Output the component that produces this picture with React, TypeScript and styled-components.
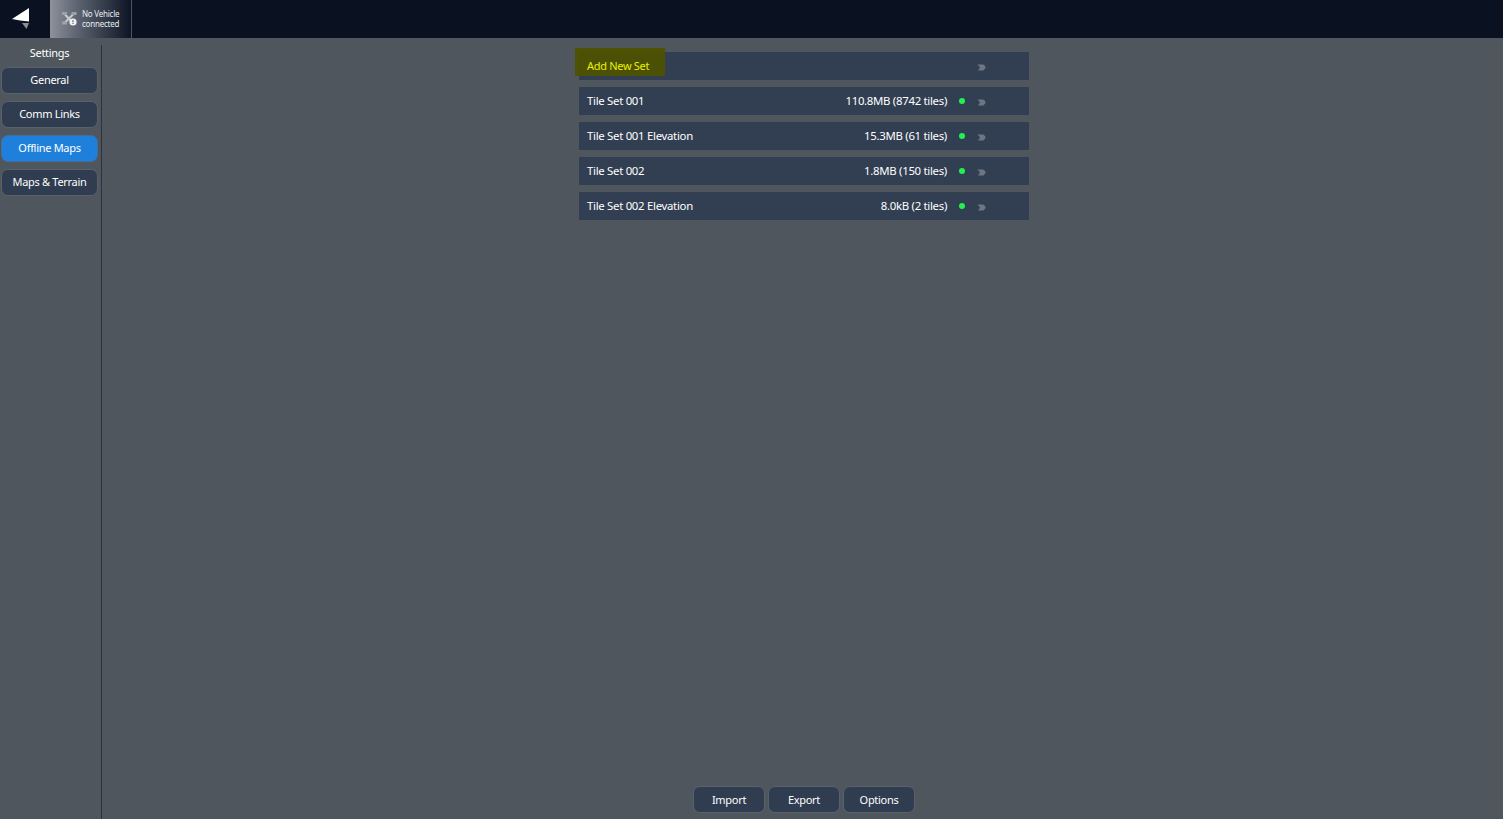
import React from "react";
import styled, { createGlobalStyle } from "styled-components";

const Global = createGlobalStyle`
  html, body { margin: 0; padding: 0; height: 100%; background: #4f565e; overflow: hidden; }
  #root { height: 100%; }
  * { box-sizing: border-box; }
`;

const Page = styled.div`
  display: flex;
  flex-direction: column;
  width: 100%;
  height: 819px;
  background: #4f565e;
  color: #fff;
  font-family: "Noto Sans", "DejaVu Sans", sans-serif;
  font-size: 11.4px;
  letter-spacing: -0.3px;
`;

const TopBar = styled.header`
  display: flex;
  flex: none;
  height: 38px;
  background: #0a1120;
`;

const LogoCell = styled.div`
  display: flex;
  width: 50px;
  height: 38px;
  padding: 6px 0 0 12px;
`;

const VehicleButton = styled.div`
  display: flex;
  align-items: center;
  gap: 5px;
  width: 82px;
  height: 38px;
  padding: 0 0 0 12px;
  background: linear-gradient(90deg, #8d929b 0%, #5b6270 35%, #0d1423 100%);
  border-right: 1px solid #4f565e;
`;

const VehicleText = styled.div`
  margin-top: -1px;
  font-size: 8px;
  line-height: 10px;
  letter-spacing: -0.22px;
  color: #e8ecef;
`;

const Body = styled.div`
  display: flex;
  flex: 1;
  min-height: 0;
`;

const Sidebar = styled.aside`
  display: flex;
  flex: none;
  flex-direction: column;
  gap: 7px;
  width: 102px;
  margin-top: 7px;
  padding: 0 3px 0 1px;
  border-right: 1px solid #2c333b;
`;

const SidebarTitle = styled.div`
  height: 15px;
  text-align: center;
  font-size: 11px;
  line-height: 15px;
`;

const Pill = styled.button<{ $active?: boolean }>`
  height: 27px;
  padding: 0 0 2px;
  border: 1px solid ${(p) => (p.$active ? "#3d6f9f" : "#59616b")};
  border-radius: 7px;
  background: ${(p) => (p.$active ? "#1f80dc" : "#303c4f")};
  color: #fff;
  font: inherit;
  font-size: 11px;
  letter-spacing: inherit;
  text-align: center;
`;

const Main = styled.main`
  display: flex;
  flex: 1;
  flex-direction: column;
  align-items: center;
  padding: 14px 0 6px 3px;
`;

const TileList = styled.div`
  display: flex;
  flex: 1;
  flex-direction: column;
  gap: 7px;
  width: 450px;
`;

const Row = styled.div`
  position: relative;
  display: flex;
  align-items: center;
  height: 28px;
  padding: 0 0 0 8px;
  background: #323e51;
`;

const RowName = styled.span<{ $accent?: boolean }>`
  position: relative;
  flex: 1;
  margin-bottom: 2px;
  font-size: ${(p) => (p.$accent ? "11px" : "inherit")};
  color: ${(p) => (p.$accent ? "#e6f000" : "#fff")};
`;

const RowSize = styled.span`
  margin-bottom: 2px;
`;

const Dot = styled.span`
  flex: none;
  width: 6px;
  height: 6px;
  margin: 0 0 0 12px;
  border-radius: 50%;
  background: #22f052;
`;

const ChevronWrap = styled.span`
  display: flex;
  flex: none;
  width: 9px;
  margin: 2px 43px 0 12px;
`;

const Highlight = styled.span`
  position: absolute;
  left: -4px;
  top: -4px;
  width: 90px;
  height: 28px;
  background: rgba(78, 82, 0, 0.94);
  pointer-events: none;
`;

const Footer = styled.footer`
  display: flex;
  gap: 3px;
`;

const FooterButton = styled.button`
  width: 72px;
  height: 27px;
  padding: 0;
  border: 1px solid #59616b;
  border-radius: 7px;
  background: #303c4f;
  color: #fff;
  font: inherit;
  font-size: 11px;
  letter-spacing: inherit;
`;

const Logo = () => (
  <svg width="18" height="24" viewBox="0 0 18 24" aria-hidden="true">
    <path d="M0 13 L17 2 L17 15.5 L8 14.5 Z" fill="#fff" />
    <path d="M10 17 L17 17 L14.5 23 Z" fill="#8b9097" />
  </svg>
);

const VehicleIcon = () => (
  <svg width="15" height="14" viewBox="0 0 15 14" aria-hidden="true">
    <path d="M3 2.5 L10 10 M11 2.5 L3 10.5" stroke="#c9ccd1" strokeWidth="2" fill="none" />
    <g fill="#9da1a8">
      <rect x="0" y="0" width="5" height="3" />
      <rect x="9.5" y="0" width="5" height="3" />
      <rect x="0" y="9.5" width="5" height="3" />
    </g>
    <circle cx="11" cy="10" r="3.6" fill="#f0f1f2" />
    <rect x="10.5" y="8" width="1" height="2.4" fill="#50565f" />
    <rect x="10.5" y="11" width="1" height="1" fill="#50565f" />
  </svg>
);

const Chevron = () => (
  <svg width="9" height="7" viewBox="0 0 9 7" aria-hidden="true">
    <path d="M0.5 0.5 H6 Q9 2 8.5 4 L6.5 6.5 H1 L3 3.5 Z" fill="#6f7682" />
  </svg>
);

const nav = ["General", "Comm Links", "Offline Maps", "Maps & Terrain"];
const sets = [
  { name: "Tile Set 001", size: "110.8MB (8742 tiles)" },
  { name: "Tile Set 001 Elevation", size: "15.3MB (61 tiles)" },
  { name: "Tile Set 002", size: "1.8MB (150 tiles)" },
  { name: "Tile Set 002 Elevation", size: "8.0kB (2 tiles)" },
];

export default function App() {
  return (
    <Page>
      <Global />
      <TopBar>
        <LogoCell><Logo /></LogoCell>
        <VehicleButton>
          <VehicleIcon />
          <VehicleText>No Vehicle<br />connected</VehicleText>
        </VehicleButton>
      </TopBar>
      <Body>
        <Sidebar>
          <SidebarTitle>Settings</SidebarTitle>
          {nav.map((n) => (
            <Pill key={n} $active={n === "Offline Maps"}>{n}</Pill>
          ))}
        </Sidebar>
        <Main>
          <TileList>
            <Row>
              <Highlight />
              <RowName $accent>Add New Set</RowName>
              <ChevronWrap><Chevron /></ChevronWrap>
            </Row>
            {sets.map((s) => (
              <Row key={s.name}>
                <RowName>{s.name}</RowName>
                <RowSize>{s.size}</RowSize>
                <Dot />
                <ChevronWrap><Chevron /></ChevronWrap>
              </Row>
            ))}
          </TileList>
          <Footer>
            <FooterButton>Import</FooterButton>
            <FooterButton>Export</FooterButton>
            <FooterButton>Options</FooterButton>
          </Footer>
        </Main>
      </Body>
    </Page>
  );
}
